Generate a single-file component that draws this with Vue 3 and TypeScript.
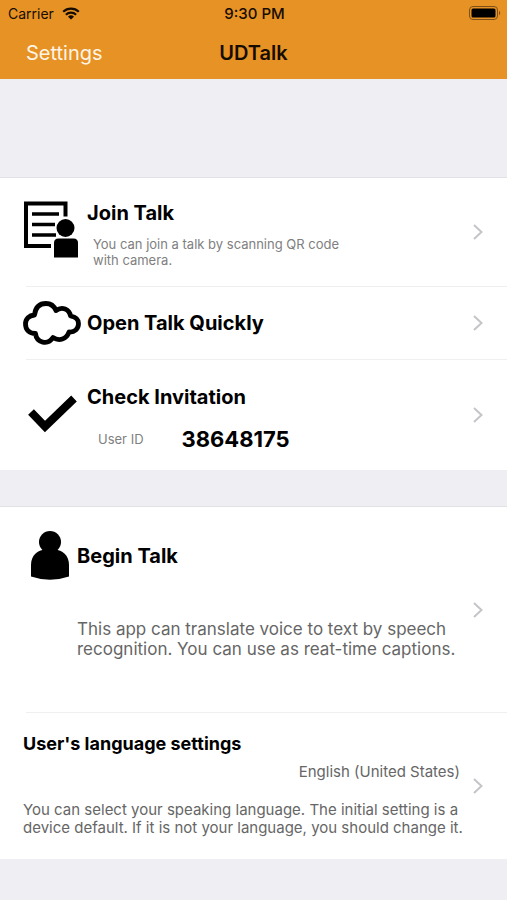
<script setup lang="ts">
import { ref } from 'vue'

const userId = ref('38648175')
const language = ref('English (United States)')
</script>

<template>
  <div class="screen">
    <header class="top">
      <div class="status">
        <div class="carrier">
          <span>Carrier</span>
          <svg class="wifi" viewBox="0 0 18 13" aria-hidden="true">
            <path d="M1.2 4.8a11.2 11.2 0 0 1 15.6 0M3.9 7.7a7.3 7.3 0 0 1 10.2 0" fill="none" stroke="#160c00" stroke-width="2.2" />
            <path d="M9 12.6 6 9.7a4.3 4.3 0 0 1 6 0z" fill="#160c00" />
          </svg>
        </div>
        <time class="clock">9:30 PM</time>
        <svg class="battery" viewBox="0 0 32 14" role="img" aria-label="Battery full">
          <rect x="0.5" y="0.5" width="28" height="13" rx="3.5" fill="none" stroke="#7c5018" />
          <rect x="2.5" y="2.5" width="24" height="9" rx="1.5" fill="#000" />
          <path d="M30 4.8c1.6.8 1.6 3.6 0 4.4z" fill="#7c5018" />
        </svg>
      </div>
      <nav class="nav">
        <button class="settings" type="button">Settings</button>
        <h1 class="app-name">UDTalk</h1>
      </nav>
    </header>

    <main>
      <section class="group">
        <button class="row join-row" type="button">
          <svg class="icon join" viewBox="0 0 56 58" aria-hidden="true">
            <path d="M28 45H3V2.500H42.500V15.500" fill="none" stroke="#000" stroke-width="4" />
            <path d="M9 13h27M9 23.500h23M9 34h24" stroke="#000" stroke-width="3.600" />
            <circle cx="42.500" cy="27" r="9" fill="#000" />
            <path d="M31 56.500V42q0-4.500 4.500-4.500h15q4.500 0 4.500 4.500v14.500z" fill="#000" />
          </svg>
          <span class="body">
            <strong class="title">Join Talk</strong>
            <span class="hint">You can join a talk by scanning QR code<br>with camera.</span>
          </span>
          <svg class="chevron" viewBox="0 0 10 16" aria-hidden="true"><path d="M1 1l7.500 7L1 15" /></svg>
        </button>
        <button class="row open-row" type="button">
          <svg class="icon cloud" viewBox="0 0 58 44" aria-hidden="true">
            <path d="M11.500 14C12.500 6 17 2.500 23 2.500Q30 2.500 33 9.500C39 5 46.500 8 47.500 15C53 16 55.500 19 55.500 22.500C55.500 28 51.500 31.500 46 31C43.500 38.500 36 40.500 30 36.500C25 44.500 13.500 42 12.500 32.500C6 32.500 2.500 28.500 2.500 23C2.500 18 6 14.500 11.500 14Z" fill="none" stroke="#000" stroke-width="4.800" stroke-linejoin="round" />
          </svg>
          <span class="body"><strong class="title">Open Talk Quickly</strong></span>
          <svg class="chevron" viewBox="0 0 10 16" aria-hidden="true"><path d="M1 1l7.500 7L1 15" /></svg>
        </button>
        <button class="row check-row" type="button">
          <svg class="icon check" viewBox="0 0 58 40" aria-hidden="true">
            <path d="M8 17 22 31.500 51 3.500" fill="none" stroke="#000" stroke-width="8" />
          </svg>
          <span class="body">
            <strong class="title">Check Invitation</strong>
            <span class="user"><span class="user-label">User ID</span><strong class="user-id">{{ userId }}</strong></span>
          </span>
          <svg class="chevron" viewBox="0 0 10 16" aria-hidden="true"><path d="M1 1l7.500 7L1 15" /></svg>
        </button>
      </section>

      <section class="group">
        <button class="row talk-row" type="button">
          <svg class="icon person" viewBox="0 0 40 50" aria-hidden="true">
            <circle cx="20" cy="12" r="11" fill="#000" />
            <path d="M1 46.500V35C1 25 8 20 15 19.500h10C32 20 39 25 39 35v11.500Q20 53 1 46.500z" fill="#000" />
          </svg>
          <span class="body">
            <strong class="title">Begin Talk</strong>
            <span class="summary">This app can translate voice to text by speech<br>recognition. You can use as reat-time captions.</span>
          </span>
          <svg class="chevron" viewBox="0 0 10 16" aria-hidden="true"><path d="M1 1l7.500 7L1 15" /></svg>
        </button>
        <button class="row language-row" type="button">
          <span class="body">
            <strong class="subtitle">User's language settings</strong>
            <span class="value">{{ language }}</span>
            <span class="note">You can select your speaking language. The initial setting is a<br>device default. If it is not your language, you should change it.</span>
          </span>
          <svg class="chevron" viewBox="0 0 10 16" aria-hidden="true"><path d="M1 1l7.500 7L1 15" /></svg>
        </button>
      </section>
    </main>
  </div>
</template>

<style>
body {
  margin: 0;
  background: #eeeef3;
}
</style>

<style scoped>
.screen {
  min-height: 100vh;
  background: #eeeef3;
  color: #000;
  font-family: Inter, "Liberation Sans", sans-serif;
}
.top {
  background: #e79224;
}
.status {
  display: grid;
  grid-template-columns: 1fr auto 1fr;
  align-items: center;
  height: 26px;
  padding: 0 6px 0 8px;
  font-size: 14px;
  color: #160c00;
}
.carrier {
  display: flex;
  align-items: center;
  gap: 8px;
}
.wifi {
  width: 18px;
  height: 13px;
}
.clock {
  font-size: 15px;
  font-weight: 500;
}
.battery {
  width: 32px;
  height: 14px;
  justify-self: end;
}
.nav {
  display: grid;
  grid-template-columns: 1fr auto 1fr;
  align-items: center;
  height: 53px;
  box-sizing: border-box;
  padding: 0 26px;
}
button {
  margin: 0;
  border: 0;
  padding: 0;
  background: none;
  color: inherit;
  font: inherit;
  text-align: left;
  cursor: pointer;
}
.settings {
  justify-self: start;
  font-size: 20px;
  color: #fff5e6;
}
.app-name {
  margin: 0;
  font-size: 20px;
  font-weight: 600;
  color: #160c00;
}
main {
  display: flex;
  flex-direction: column;
  gap: 36px;
  padding-top: 98px;
}
.group {
  border-top: 1px solid #e2e2e6;
  background: #fff;
}
.row {
  display: flex;
  align-items: center;
  width: 100%;
  padding: 0 24px 0 23px;
  box-sizing: border-box;
}
.row + .row {
  background: linear-gradient(#efeff1, #efeff1) 26px 0 / 100% 1px no-repeat;
}
.icon {
  flex: none;
}
.body {
  display: flex;
  flex: 1;
  flex-direction: column;
  min-width: 0;
}
.title {
  font-size: 20px;
  line-height: 24px;
  font-weight: 700;
}
.chevron {
  flex: none;
  width: 10px;
  height: 16px;
  fill: none;
  stroke: #c5c5c9;
  stroke-width: 2;
}
.join-row {
  height: 108px;
}
.join-row .body {
  padding-top: 4px;
}
.join {
  width: 56px;
  height: 58px;
  margin: 0 8px 4px 0;
}
.hint {
  margin-top: 11px;
  padding-left: 6px;
  font-size: 13px;
  line-height: 16px;
  color: #808080;
}
.open-row {
  height: 73px;
}
.cloud {
  width: 58px;
  height: 44px;
  margin-right: 6px;
}
.check-row {
  height: 111px;
}
.check-row .body {
  padding-top: 8px;
}
.check {
  width: 58px;
  height: 40px;
  margin-right: 6px;
}
.user {
  display: flex;
  align-items: center;
  gap: 38px;
  margin-top: 16px;
  padding-left: 11px;
}
.user-label {
  font-size: 13px;
  color: #808080;
}
.user-id {
  font-size: 22px;
  line-height: 28px;
  font-weight: 700;
}
.talk-row {
  height: 205px;
}
.talk-row .body {
  padding-bottom: 16px;
}
.person {
  align-self: flex-start;
  width: 40px;
  height: 50px;
  margin: 23px 7px 0;
}
.summary {
  margin-top: 51px;
  font-size: 17px;
  line-height: 20px;
  color: #666;
}
.language-row {
  height: 147px;
}
.language-row .body {
  padding-bottom: 2px;
}
.subtitle {
  font-size: 18px;
  line-height: 22px;
  font-weight: 700;
}
.value {
  align-self: flex-end;
  margin: 8px 13px 20px 0;
  font-size: 15px;
  line-height: 18px;
  color: #666;
}
.note {
  font-size: 15px;
  line-height: 18px;
  color: #666;
}
</style>
